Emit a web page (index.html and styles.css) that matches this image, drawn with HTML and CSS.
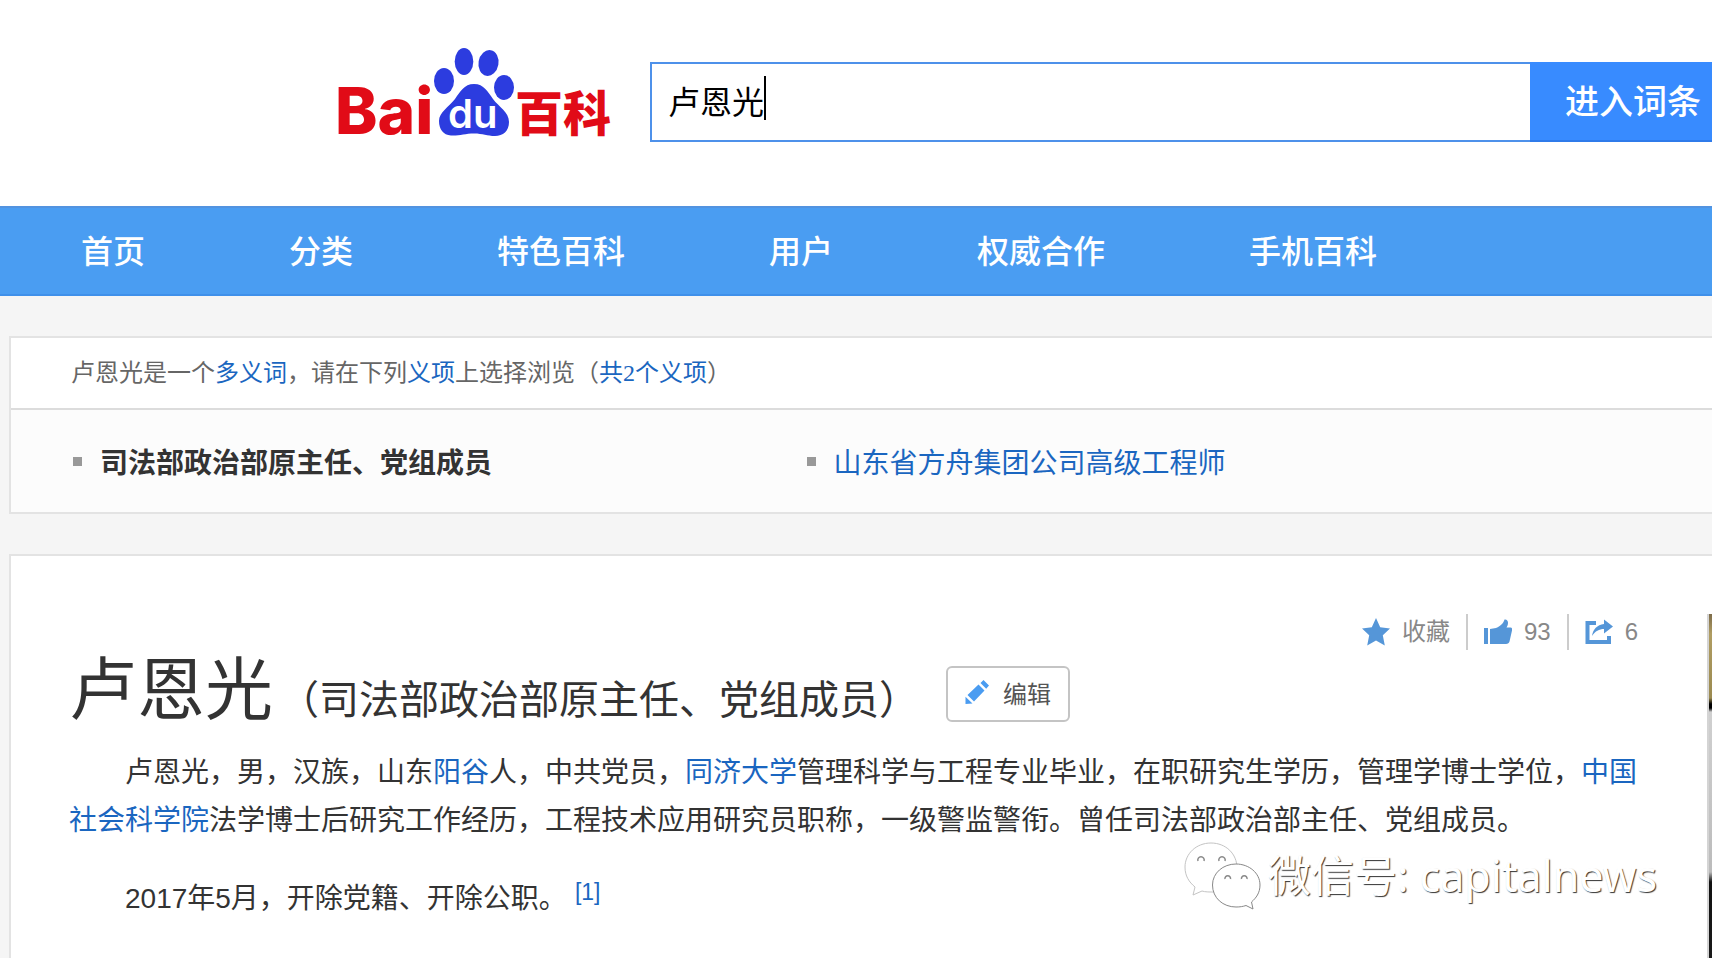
FILE: index.html
```
<!DOCTYPE html>
<html lang="zh-CN">
<head>
  <meta charset="UTF-8">
  <meta name="viewport" content="width=device-width, initial-scale=1.0">
  <title>卢恩光_百度百科</title>
  <link rel="stylesheet" href="styles.css">
</head>
<body>
  <header class="header">
    <a class="logo" href="#" aria-label="百度百科">
      <svg width="272" height="95" viewBox="0 0 272 95">
        <g fill="#2c3cdf">
          <ellipse cx="105" cy="34" rx="10" ry="13"/>
          <ellipse cx="125" cy="14.5" rx="9.3" ry="13.5"/>
          <ellipse cx="149.5" cy="16" rx="10" ry="13" transform="rotate(10 149.5 16)"/>
          <ellipse cx="165" cy="40.5" rx="10" ry="12.5"/>
          <path d="M135 37C145 37 149 45 154 52C160 60 170 65 170 75C170 84 164 89 156 89C148 89 144 86.500 135 86.500C126 86.500 120 89 112 88.500C104 88 100 82 100 74C100 65 110 60 116 52C121 45 125 37 135 37Z"/>
        </g>
        <text class="logo-red" x="-4" y="87">Bai</text>
        <text class="logo-du" x="109" y="81">du</text>
        <text class="logo-cn" x="176" y="84">百科</text>
      </svg>
    </a>
    <form class="search">
      <div class="search-box">
        <input class="search-input" type="text" value="卢恩光" aria-label="搜索词条">
        <span class="caret"></span>
      </div>
      <button class="search-btn" type="submit">进入词条</button>
    </form>
  </header>

  <nav class="nav">
    <a href="#">首页</a>
    <a href="#">分类</a>
    <a href="#">特色百科</a>
    <a href="#">用户</a>
    <a href="#">权威合作</a>
    <a href="#">手机百科</a>
  </nav>

  <main class="main">
    <section class="card polysemy">
      <p class="polysemy-tip">卢恩光是一个<a href="#">多义词</a>，请在下列<a href="#">义项</a>上选择浏览（<a href="#">共2个义项</a>）</p>
      <ul class="polysemy-list">
        <li class="current">司法部政治部原主任、党组成员</li>
        <li><a href="#">山东省方舟集团公司高级工程师</a></li>
      </ul>
    </section>

    <section class="card lemma">
      <div class="content">
        <div class="tools">
          <button class="tool" type="button">
            <svg width="28" height="28" viewBox="0 0 28 28" fill="#5596d8"><path d="M14 0L18.200 9.200L28 10.400L20.800 17.200L22.800 27.500L14 22.600L5.200 27.500L7.200 17.200L0 10.400L9.800 9.200Z"/></svg>
            收藏
          </button>
          <button class="tool" type="button">
            <svg width="28" height="28" viewBox="0 0 28 28" fill="#5596d8"><path d="M0 10H4V26H0ZM6 11L12 10C17 8 19.500 5 20.500 1.500C22.500 1 24 2.500 24 4.500C24 6.500 23.500 8 22.500 9.500H26.500C28 9.500 28.500 11 28 12.500L25.500 23.500C25 25 24 26 22 26H6Z"/></svg>
            93
          </button>
          <button class="tool" type="button">
            <svg width="28" height="28" viewBox="0 0 28 28"><path d="M11 5H2.500V24H24V18" fill="none" stroke="#5596d8" stroke-width="4"/><path d="M7 18C8 11 12 7 19 6V1.500L28 8.500L19 15.500V11C14 11 10.500 13 7 18Z" fill="#5596d8"/></svg>
            6
          </button>
        </div>
        <div class="title">
          <h1>卢恩光</h1>
          <h2>（司法部政治部原主任、党组成员）</h2>
          <button class="edit-btn" type="button">
            <svg width="24" height="24" viewBox="0 0 24 24" fill="#4a9cf1"><path d="M0.500 24V16.800L7.500 23.500ZM2.500 15L13.500 4.500L19.500 10.500L9 21.500ZM15.500 3L18.500 0L24 5.500L21.200 8.700Z"/></svg>
            编辑
          </button>
        </div>
        <div class="summary">
          <p>卢恩光，男，汉族，山东<a href="#">阳谷</a>人，中共党员，<a href="#">同济大学</a>管理科学与工程专业毕业，在职研究生学历，管理学博士学位，<a href="#">中国社会科学院</a>法学博士后研究工作经历，工程技术应用研究员职称，一级警监警衔。曾任司法部政治部主任、党组成员。</p>
          <p>2017年5月，开除党籍、开除公职。<a class="ref" href="#">[1]</a></p>
        </div>
      </div>
      <div class="photo"></div>
      <div class="watermark">
        <svg width="80" height="68" viewBox="0 0 80 68">
          <g fill="#fff" stroke-width="1">
            <path stroke="#c4c4c4" d="M27 1C12 1 1 12 1 25C1 34 5 40 11 45L9 53L18 49C21 50 25 50 29 50C44 50 53 39 53 26C53 12 42 1 27 1Z"/>
            <path stroke="#888" d="M52 22C39 22 28.500 31 28.500 43C28.500 56 39 65 52 65C56 65 59 64.500 62 63.500L69 67L67.500 60C72 56 76 51 76 43C76 31 65 22 52 22Z"/>
          </g>
          <g fill="none" stroke="#888" stroke-width="1.500">
            <path d="M14 19A3.200 3.200 0 1 1 20 19"/>
            <path d="M35 19A3.200 3.200 0 1 1 41 19"/>
            <path d="M41 37A2.800 2.800 0 1 1 46.500 37"/>
            <path d="M57.500 37A2.800 2.800 0 1 1 63 37"/>
          </g>
        </svg>
        <span>微信号: capitalnews</span>
      </div>
    </section>
  </main>
</body>
</html>
```
FILE: styles.css
```
* {
    box-sizing: border-box;
}

body {
    margin: 0;
    min-height: 100vh;
    display: flex;
    flex-direction: column;
    background-color: #f5f5f5;
    color: #333;
    font-family: "Liberation Sans", "Noto Sans CJK SC", sans-serif;
}

h1, h2, p, ul {
    margin: 0;
    padding: 0;
    font-weight: normal;
}

a {
    color: #1a66c0;
    text-decoration: none;
}

button, input {
    font-family: inherit;
}

svg {
    display: block;
    flex: none;
}

.header, .nav, .polysemy-list, .title {
    font-family: "Noto Sans CJK SC", sans-serif;
}

/* header */
.header {
    display: flex;
    align-items: flex-end;
    gap: 39px;
    padding: 47px 0 64px 339px;
    background-color: #fff;
}

.logo svg {
    overflow: visible;
}

.logo-red {
    fill: #e10b17;
    font-family: Inter, sans-serif;
    font-size: 64px;
    font-weight: 800;
}

.logo-du {
    fill: #fff;
    font-family: Inter, sans-serif;
    font-size: 40px;
    font-weight: 600;
}

.logo-cn {
    fill: #e10b17;
    font-size: 48px;
    font-weight: 900;
}

.search {
    display: flex;
    flex: 1;
    height: 80px;
}

.search-box {
    position: relative;
    flex: 1;
}

.search-input {
    width: 100%;
    height: 100%;
    padding: 0 16px 4px;
    border: 2px solid #4e91ea;
    border-right: none;
    border-radius: 0;
    background-color: #fff;
    color: #000;
    font-size: 32px;
    outline: none;
}

.caret {
    position: absolute;
    left: 114px;
    top: 14px;
    width: 2px;
    height: 44px;
    background-color: #000;
}

.search-btn {
    width: 182px;
    padding: 0 0 4px 24px;
    border: none;
    border-bottom: 2px solid #2f7bea;
    background-color: #388bff;
    color: #fff;
    font-size: 34px;
    font-weight: 500;
    white-space: nowrap;
    cursor: pointer;
}

/* nav */
.nav {
    display: flex;
    align-items: center;
    gap: 144px;
    height: 90px;
    padding: 0 0 4px 81px;
    border-top: 2px solid #5293e0;
    border-bottom: 2px solid #3f90ea;
    background-color: #4a9df2;
}

.nav a {
    color: #fff;
    font-size: 32px;
    font-weight: 500;
}

/* cards */
.main {
    display: flex;
    flex-direction: column;
    flex: 1;
    gap: 40px;
    padding: 40px 0 0 9px;
}

.card {
    border: 2px solid #e3e3e3;
    border-right: none;
    background-color: #fff;
}

.polysemy-tip {
    padding-left: 60px;
    border-bottom: 2px solid #dcdcdc;
    color: #666;
    font-family: "Liberation Serif", "Noto Sans CJK SC", serif;
    font-size: 24px;
    line-height: 70px;
}

.polysemy-list {
    display: grid;
    grid-template-columns: 1fr 1fr;
    padding: 0 172px 0 62px;
    background-color: #fcfcfc;
    list-style: none;
    font-size: 28px;
    line-height: 102px;
}

.polysemy-list li {
    display: flex;
    align-items: center;
    gap: 18px;
}

.polysemy-list li::before {
    content: "";
    width: 9px;
    height: 9px;
    background-color: #999;
}

.polysemy-list .current {
    font-weight: bold;
}

/* lemma */
.lemma {
    position: relative;
    display: flex;
    flex: 1;
    gap: 68px;
    padding-top: 58px;
    border-bottom: none;
}

.content {
    flex: 1;
    padding-left: 58px;
}

.tools {
    display: flex;
    justify-content: flex-end;
    height: 36px;
    padding-right: 1px;
}

.tool {
    display: flex;
    align-items: center;
    gap: 12px;
    padding: 0 16px;
    border: none;
    border-left: 2px solid #ccc;
    background: none;
    color: #888;
    font-size: 24px;
    line-height: 28px;
    cursor: pointer;
}

.tool:first-child {
    border-left: none;
}

.tool:last-child {
    padding-right: 0;
}

.title {
    display: flex;
    align-items: baseline;
    height: 72px;
}

.title h1 {
    font-size: 68px;
    line-height: 70px;
}

.title h2 {
    margin-left: 6px;
    font-size: 40px;
    line-height: 40px;
}

.edit-btn {
    display: flex;
    align-items: center;
    align-self: flex-end;
    gap: 14px;
    height: 56px;
    margin-left: 27px;
    padding: 0 17px 4px;
    border: 2px solid #c4c4c4;
    border-radius: 6px;
    background-color: #fff;
    color: #555;
    font-size: 24px;
    cursor: pointer;
}

.summary {
    margin-top: 27px;
    font-size: 28px;
    line-height: 48px;
}

.summary p {
    margin-bottom: 30px;
    text-indent: 56px;
}

.ref {
    display: inline-block;
    margin-left: 8px;
    font-size: 23px;
    line-height: 24px;
    text-indent: 0;
    vertical-align: 8px;
}

.photo {
    width: 5px;
    border-left: 2px solid #d4d4d4;
    background: linear-gradient(#7d6c4a 0, #b09d62 20px, #9b8a50 84px, #000 90px, #000 94px, #d0d0d0 98px, #bbb 258px, #111 268px, #1a1a1a 100%);
}

/* watermark */
.watermark {
    position: absolute;
    right: 55px;
    bottom: 48px;
    display: flex;
    align-items: center;
    gap: 4px;
    color: #fff;
    font-family: "Noto Sans", "Noto Sans CJK SC", sans-serif;
    font-size: 43px;
    line-height: 68px;
    text-shadow: 1px 1px 1px #333;
}
```
